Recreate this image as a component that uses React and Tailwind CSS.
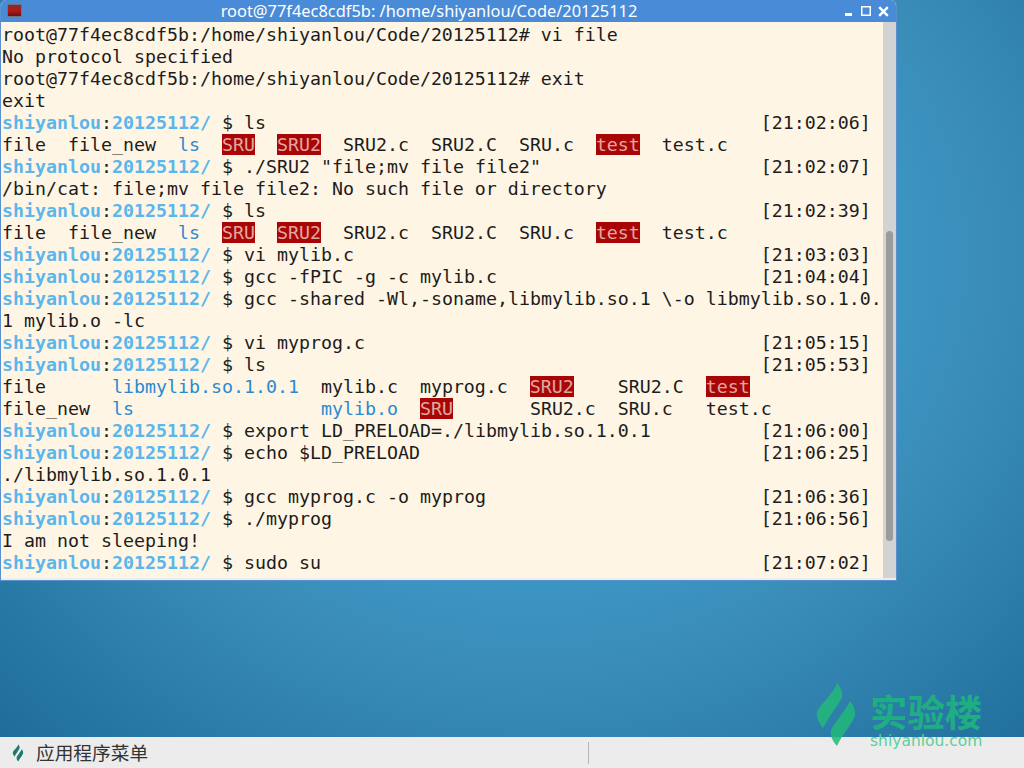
const LINK = 'text-[#2a8ad0]'

function Prompt({ cmd, time }) {
  const used = 22 + cmd.length
  return (
    <div className="h-[22px]">
      <span className="font-bold text-[#5ab6ec]">shiyanlou</span>:<span className="font-bold text-[#5ab6ec]">20125112/</span> $ {cmd}
      {time ? ' '.repeat(69 - used) + '[' + time + ']' : ''}
    </div>
  )
}

function Red({ children }) {
  return <span className="bg-[#a80606] text-[#e2a6a0]">{children}</span>
}

function Line({ children }) {
  return <div className="h-[22px]">{children}</div>
}

function ListShort() {
  return (
    <Line>
      file  file_new  <span className={LINK}>ls</span>  <Red>SRU</Red>  <Red>SRU2</Red>  SRU2.c  SRU2.C  SRU.c  <Red>test</Red>  test.c
    </Line>
  )
}

function LeafLogo({ className, fill, fillOpacity }) {
  return (
    <svg className={className} viewBox="0 0 42 67" fill={fill} fillOpacity={fillOpacity}>
      <path d="M22 2C26 7 28 12 27 16C26 20 14 36 8 47C3 41 1 35 2 31C4 24 18 14 22 2Z" />
      <path d="M35 20C39 25 41 30 40 34C38 42 28 52 22 65C17 60 15 54 16 49C18 44 30 30 35 20Z" />
    </svg>
  )
}

export default function App() {
  return (
    <div className="relative flex h-screen w-[1024px] flex-col overflow-hidden">
      <main className="flex-1 bg-[radial-gradient(ellipse_farthest-corner_at_52%_35%,#3e9ac6_0%,#3c98c5_44%,#3a8cb8_62%,#2575a3_90%,#1f6c9b_100%)]">
        <section className="flex h-[581px] w-[897px] flex-col overflow-hidden rounded-t-[6px] border-x border-b border-[#5a8fd0] bg-[#ededed]">
          <header className="relative flex h-[22px] items-center justify-center bg-[#4a8bd8] pr-[39px] font-['Noto_Sans',sans-serif] text-[16.4px] text-white">
            <span className="absolute left-[6px] top-[4px] h-[13px] w-[15px] rounded-[1px] border border-[#6b7480] bg-[linear-gradient(#8a2a2a,#b01818_55%,#6a1010)]" />
            <span>root@77f4ec8cdf5b: /home/shiyanlou/Code/20125112</span>
            <div className="absolute right-[7px] top-[6px] flex items-start gap-[7px]">
              <svg className="mt-[2px] h-[10px] w-[10px]" viewBox="0 0 10 10">
                <rect x="1" y="5" width="7" height="3" fill="#fff" />
              </svg>
              <svg className="h-[10px] w-[10px]" viewBox="0 0 10 10" fill="none">
                <rect x="0.75" y="0.75" width="8.5" height="8.5" stroke="#fff" strokeWidth="1.5" />
              </svg>
              <svg className="h-[11px] w-[11px]" viewBox="0 0 11 11" fill="none">
                <path d="M1.2 1.2L9.8 9.8M9.8 1.2L1.2 9.8" stroke="#fff" strokeWidth="2.4" />
              </svg>
            </div>
          </header>
          <div className="flex min-h-0 flex-1">
            <div className="flex-1 overflow-hidden whitespace-pre bg-[#fff5e4] pl-[1px] pt-[2px] font-['DejaVu_Sans_Mono',monospace] text-[18.27px] leading-[22px] text-[#1c1c1c]">
              <Line>root@77f4ec8cdf5b:/home/shiyanlou/Code/20125112# vi file</Line>
              <Line>No protocol specified</Line>
              <Line>root@77f4ec8cdf5b:/home/shiyanlou/Code/20125112# exit</Line>
              <Line>exit</Line>
              <Prompt cmd="ls" time="21:02:06" />
              <ListShort />
              <Prompt cmd={'./SRU2 "file;mv file file2"'} time="21:02:07" />
              <Line>/bin/cat: file;mv file file2: No such file or directory</Line>
              <Prompt cmd="ls" time="21:02:39" />
              <ListShort />
              <Prompt cmd="vi mylib.c" time="21:03:03" />
              <Prompt cmd="gcc -fPIC -g -c mylib.c" time="21:04:04" />
              <Prompt cmd="gcc -shared -Wl,-soname,libmylib.so.1 \-o libmylib.so.1.0." />
              <Line>1 mylib.o -lc</Line>
              <Prompt cmd="vi myprog.c" time="21:05:15" />
              <Prompt cmd="ls" time="21:05:53" />
              <Line>
                file      <span className={LINK}>libmylib.so.1.0.1</span>  mylib.c  myprog.c  <Red>SRU2</Red>    SRU2.C  <Red>test</Red>
              </Line>
              <Line>
                file_new  <span className={LINK}>ls</span>                 <span className={LINK}>mylib.o</span>  <Red>SRU</Red>       SRU2.c  SRU.c   test.c
              </Line>
              <Prompt cmd="export LD_PRELOAD=./libmylib.so.1.0.1" time="21:06:00" />
              <Prompt cmd="echo $LD_PRELOAD" time="21:06:25" />
              <Line>./libmylib.so.1.0.1</Line>
              <Prompt cmd="gcc myprog.c -o myprog" time="21:06:36" />
              <Prompt cmd="./myprog" time="21:06:56" />
              <Line>I am not sleeping!</Line>
              <Prompt cmd="sudo su" time="21:07:02" />
            </div>
            <div className="w-[13px] bg-[#d3d3d3] pl-[3px] pt-[209px]">
              <div className="h-[310px] w-[7px] rounded-[4px] bg-[#9b9b9b]" />
            </div>
          </div>
          <div className="h-[2px] bg-[#ededed]" />
        </section>
      </main>
      <footer className="flex h-[31px] items-center bg-[#ececec] pl-[12px] font-['Noto_Sans_CJK_SC',sans-serif] text-[18.7px] text-[#333]">
        <LeafLogo className="h-[18px] w-[12px]" fill="#1f7a6e" />
        <span className="ml-[12px]">应用程序菜单</span>
        <span className="ml-[440px] h-[22px] w-px bg-[#b4b4b4]" />
      </footer>
      <div className="absolute left-[815px] top-[681px] flex items-start gap-[13px]">
        <LeafLogo className="h-[67px] w-[42px]" fill="#22b878" fillOpacity="0.85" />
        <div className="mt-[9px] flex flex-col items-center">
          <span className="font-['Noto_Sans_CJK_SC',sans-serif] text-[37.4px] font-bold leading-[42px] text-[#1fae82]">实验楼</span>
          <span className="font-['DejaVu_Sans',sans-serif] text-[15.5px] leading-[18px] text-[#5ccf9c]">shiyanlou.com</span>
        </div>
      </div>
    </div>
  )
}
